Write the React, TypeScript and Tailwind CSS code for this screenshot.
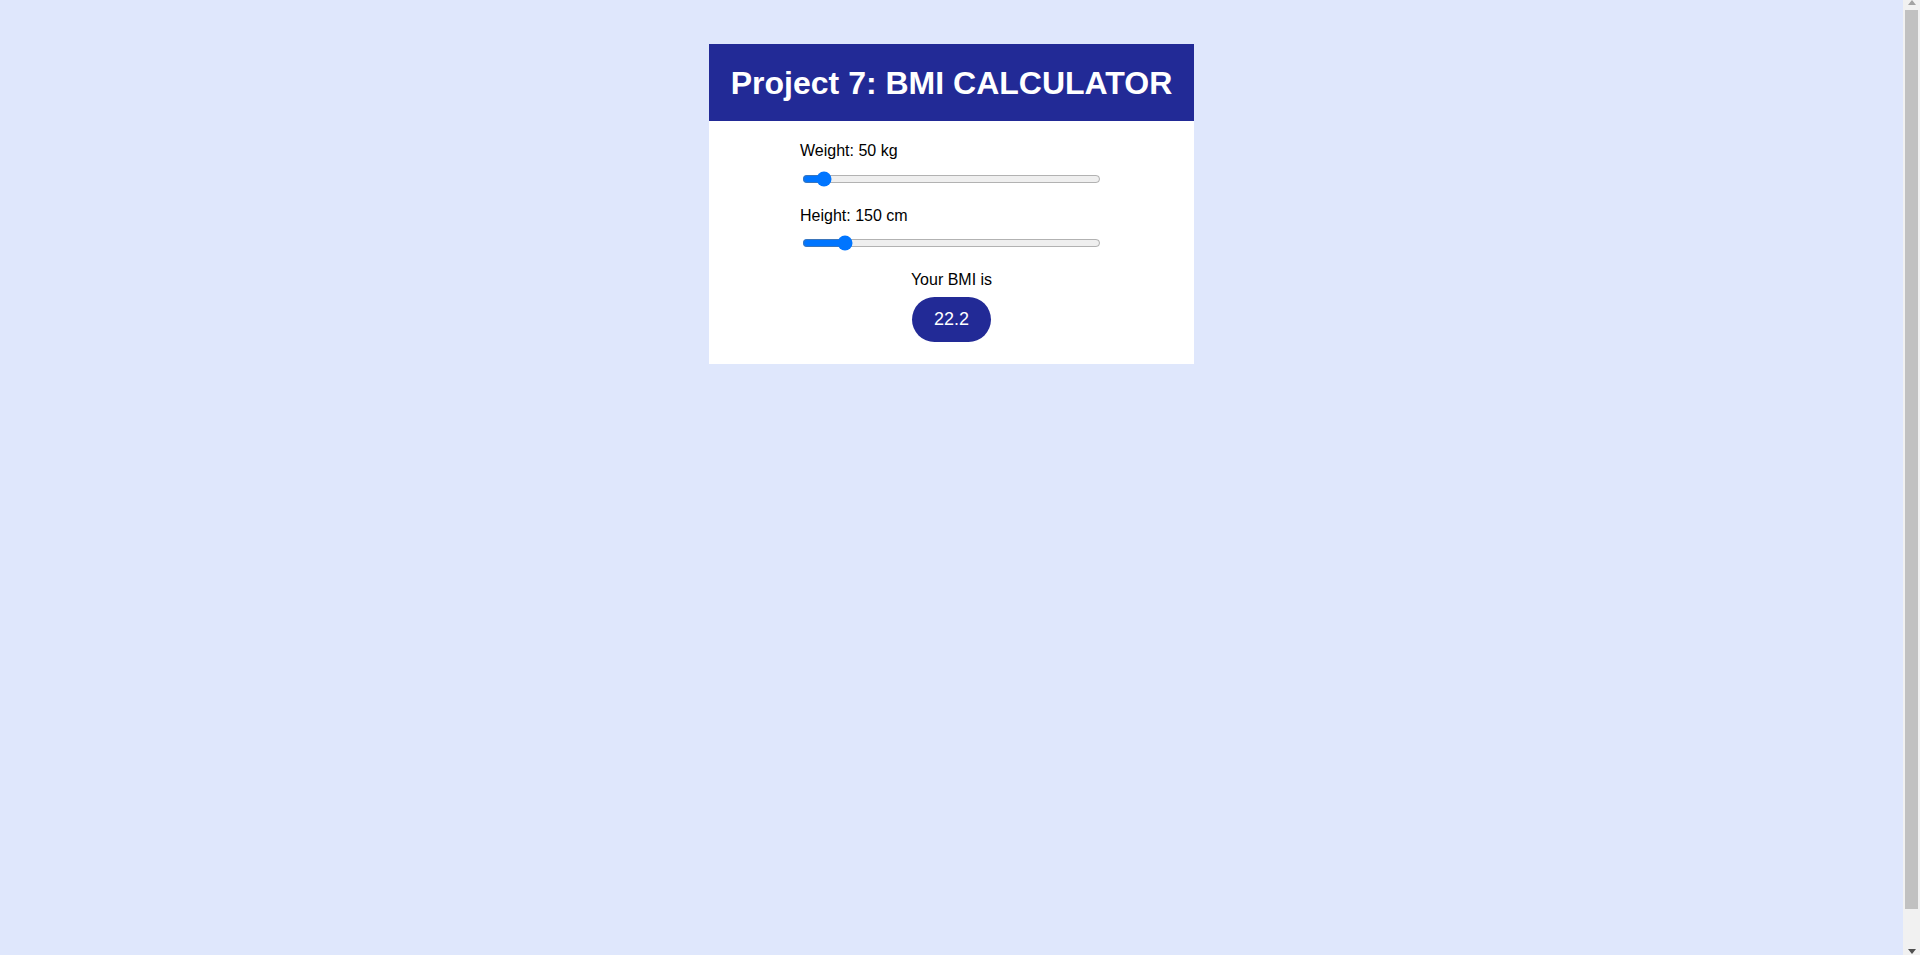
import { useState } from 'react';

export default function App() {
  const [weight, setWeight] = useState(50);
  const [height, setHeight] = useState(150);

  // BMI = kg / m^2
  const bmi = (weight / ((height / 100) * (height / 100))).toFixed(1);

  return (
    <div
      className="flex h-screen overflow-hidden bg-[#dfe7fc]"
      style={{ fontFamily: '"Liberation Sans", Arial, sans-serif' }}
    >
      <div className="flex-1 pt-[44px]">
        <div className="mx-auto w-[485px] bg-white">
          {/* Header */}
          <div className="flex h-[77px] items-center justify-center bg-[#222a96]">
            <h1 className="pt-[2px] text-[32px] font-bold leading-[37px] text-white">
              Project 7: BMI CALCULATOR
            </h1>
          </div>

          {/* Sliders */}
          <div className="flex flex-col items-start pl-[91px] pt-[21px] text-[16px] leading-[18px] text-black">
            <p>Weight: {weight} kg</p>
            <input
              type="range"
              min={40}
              max={240}
              step={1}
              value={weight}
              onChange={(e) => setWeight(Number(e.target.value))}
              className="ml-[2px] mt-[11px] block h-[16px] w-[299px] accent-[#0075ff]"
            />
            <p className="mt-[20px]">Height: {height} cm</p>
            <input
              type="range"
              min={140}
              max={220}
              step={1}
              value={height}
              onChange={(e) => setHeight(Number(e.target.value))}
              className="ml-[2px] mt-[10px] block h-[16px] w-[299px] accent-[#0075ff]"
            />
          </div>

          {/* Result */}
          <div className="flex flex-col items-center pb-[22px] pt-[19px]">
            <p className="text-[16px] leading-[19px] text-black">Your BMI is</p>
            <div className="mt-[8px] flex h-[45px] w-[79px] items-center justify-center rounded-full bg-[#222a96] text-[18px] text-white">
              {bmi}
            </div>
          </div>
        </div>
      </div>

      {/* Browser scrollbar */}
      <div className="flex w-[17px] flex-col bg-[#f1f1f1]">
        <div className="flex h-[10px] items-start justify-center">
          <svg width="8" height="5" viewBox="0 0 8 5">
            <path d="M4 0 L8 5 L0 5 Z" fill="#a3a3a3" />
          </svg>
        </div>
        <div className="mx-[2px] h-[899px] bg-[#c1c1c1]" />
        <div className="flex flex-1 items-end justify-center pb-[1px]">
          <svg width="8" height="5" viewBox="0 0 8 5">
            <path d="M0 0 L8 0 L4 5 Z" fill="#505050" />
          </svg>
        </div>
      </div>
    </div>
  );
}
